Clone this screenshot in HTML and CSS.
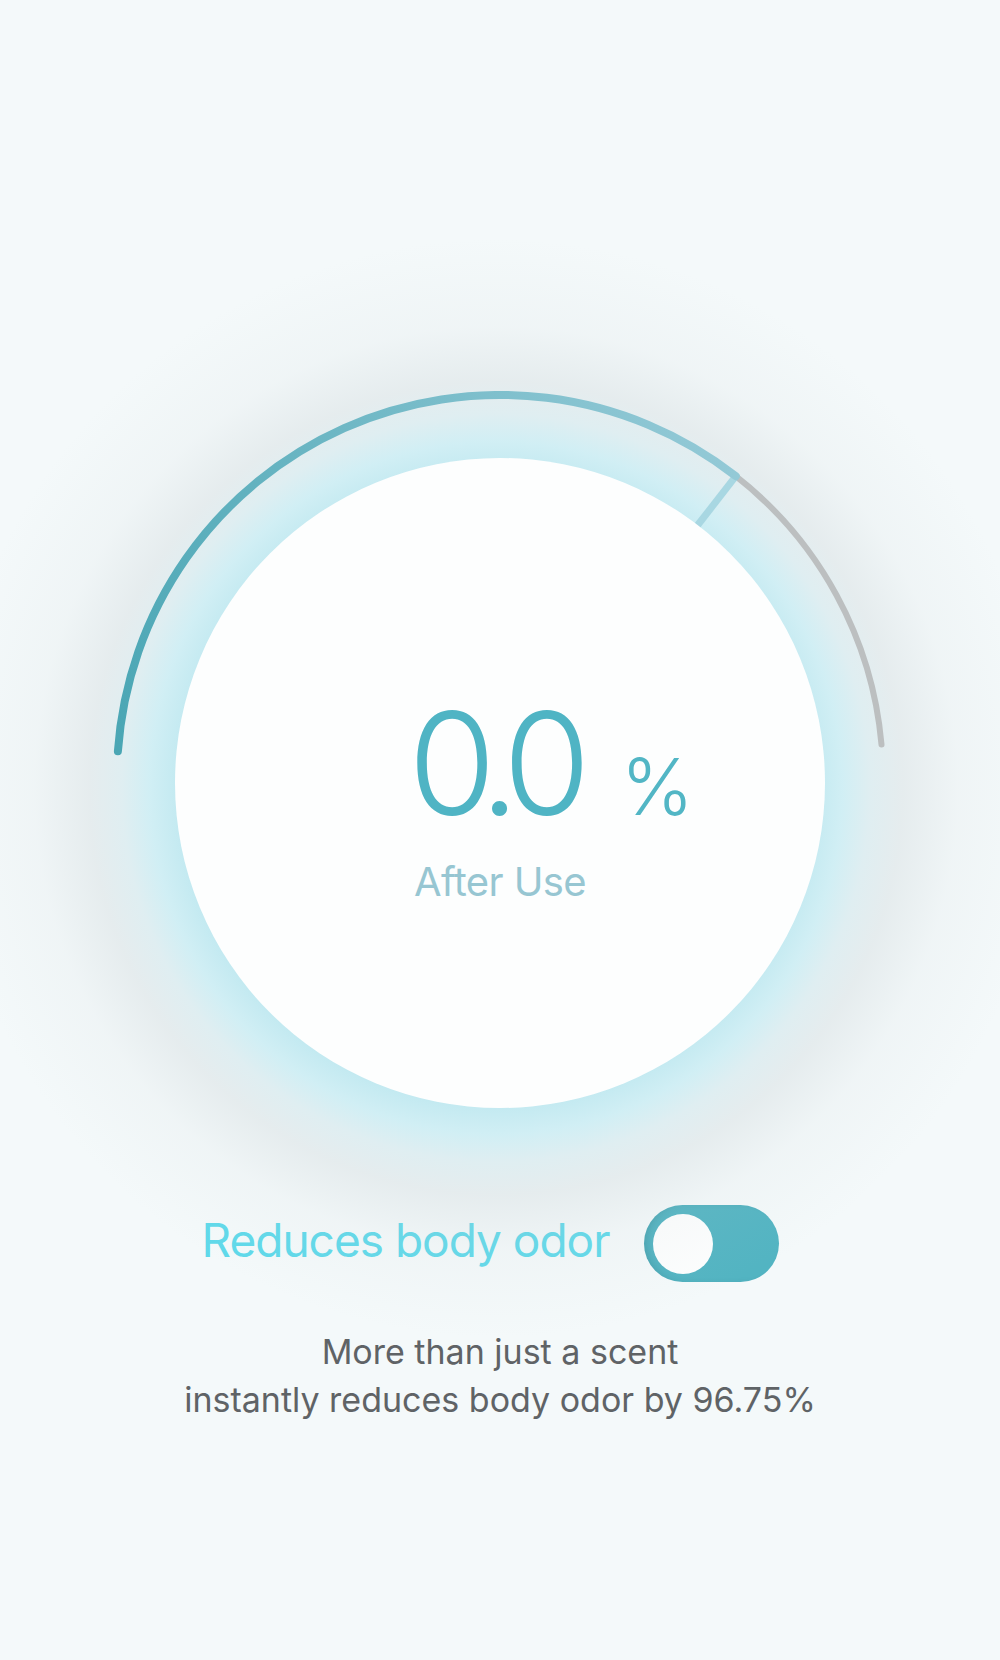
FILE: index.html
```html
<!DOCTYPE html>
<html lang="en">
<head>
    <meta charset="utf-8">
    <title>Body odor reduction</title>
    <link rel="stylesheet" href="styles.css">
</head>
<body>
    <main class="page">
        <section class="gauge">
            <svg class="gauge-arc" width="860" height="784" viewBox="0 0 860 784">
                <defs>
                    <linearGradient id="arcFill" gradientUnits="userSpaceOnUse" x1="48" y1="360" x2="666" y2="85">
                        <stop offset="0" stop-color="#4aa6b4"/>
                        <stop offset="1" stop-color="#93c9d6"/>
                    </linearGradient>
                </defs>
                <path d="M 665.8 85.2 A 383 383 0 0 1 811.5 353.6" fill="none" stroke="#bcbfc0" stroke-width="6" stroke-linecap="round"/>
                <path d="M 665.8 85.2 L 627 135" fill="none" stroke="#a8d7e2" stroke-width="7"/>
                <path d="M 47.9 360.3 A 383 383 0 0 1 665.8 85.2" fill="none" stroke="url(#arcFill)" stroke-width="8" stroke-linecap="round"/>
            </svg>
            <div class="dial">
                <div class="reading">
                    <span class="value">0.0</span>
                    <span class="unit">%</span>
                </div>
                <div class="caption">After Use</div>
            </div>
        </section>

        <div class="feature">
            <span class="feature-label">Reduces body odor</span>
            <span class="toggle"><span class="knob"></span></span>
        </div>

        <p class="note">More than just a scent<br>instantly reduces body odor by 96.75%</p>
    </main>
</body>
</html>
```

FILE: styles.css
```css
html, body {
    margin: 0;
    padding: 0;
}
body {
    background: #f4f9fa;
    font-family: Inter, "Noto Sans", "Liberation Sans", sans-serif;
    overflow: hidden;
}
.page {
    width: 1000px;
    height: 1660px;
    display: flex;
    flex-direction: column;
    align-items: center;
}
.gauge {
    position: relative;
    width: 860px;
    height: 784px;
    margin-top: 391px;
    display: flex;
    align-items: center;
    justify-content: center;
}
.gauge::before {
    content: '';
    position: absolute;
    left: 50%;
    top: 50%;
    width: 1100px;
    height: 1100px;
    margin: -545px 0 0 -554px;
    border-radius: 50%;
    background: radial-gradient(circle closest-side,
        rgba(190, 232, 240, 0.9) 58%,
        rgba(200, 236, 243, 0.8) 63%,
        rgba(208, 230, 235, 0.58) 68%,
        rgba(186, 198, 202, 0.25) 74%,
        rgba(192, 202, 206, 0.09) 84%,
        rgba(244, 249, 250, 0) 100%);
}
.gauge-arc {
    position: absolute;
    top: 0;
    left: 0;
}
.dial {
    position: relative;
    z-index: 1;
    box-sizing: border-box;
    width: 650px;
    height: 650px;
    padding-top: 234px;
    border-radius: 50%;
    background: #fdfefe;
    display: flex;
    flex-direction: column;
    align-items: center;
}
.reading {
    position: relative;
}
.value {
    display: block;
    font-size: 142px;
    font-weight: 300;
    line-height: 1;
    color: #4fb4c4;
    letter-spacing: -13px;
    margin-right: 14px;
}
.unit {
    position: absolute;
    top: 56px;
    left: calc(100% + 29px);
    font-size: 78px;
    font-weight: 300;
    line-height: 1;
    color: #52b6c5;
}
.caption {
    margin-top: 28px;
    font-size: 40px;
    line-height: 1;
    color: #97c6d2;
    letter-spacing: -0.6px;
}
.feature {
    display: flex;
    align-items: center;
    gap: 34px;
    margin-top: 30px;
    margin-left: -20px;
}
.feature-label {
    margin-bottom: 7px;
    font-size: 46px;
    line-height: 1;
    color: #5fd9ea;
    letter-spacing: -1px;
}
.toggle {
    box-sizing: border-box;
    width: 135px;
    height: 77px;
    padding-left: 9px;
    border-radius: 39px;
    background: #52b4c2;
    box-shadow: inset 6px 0 8px -4px rgba(0, 60, 70, 0.18);
    display: flex;
    align-items: center;
}
.knob {
    width: 60px;
    height: 60px;
    border-radius: 50%;
    background: #fdfefe;
}
.note {
    margin: 46px 0 0;
    font-size: 34px;
    font-weight: 400;
    line-height: 48px;
    color: #5f6366;
    text-align: center;
    letter-spacing: 0;
}
```
